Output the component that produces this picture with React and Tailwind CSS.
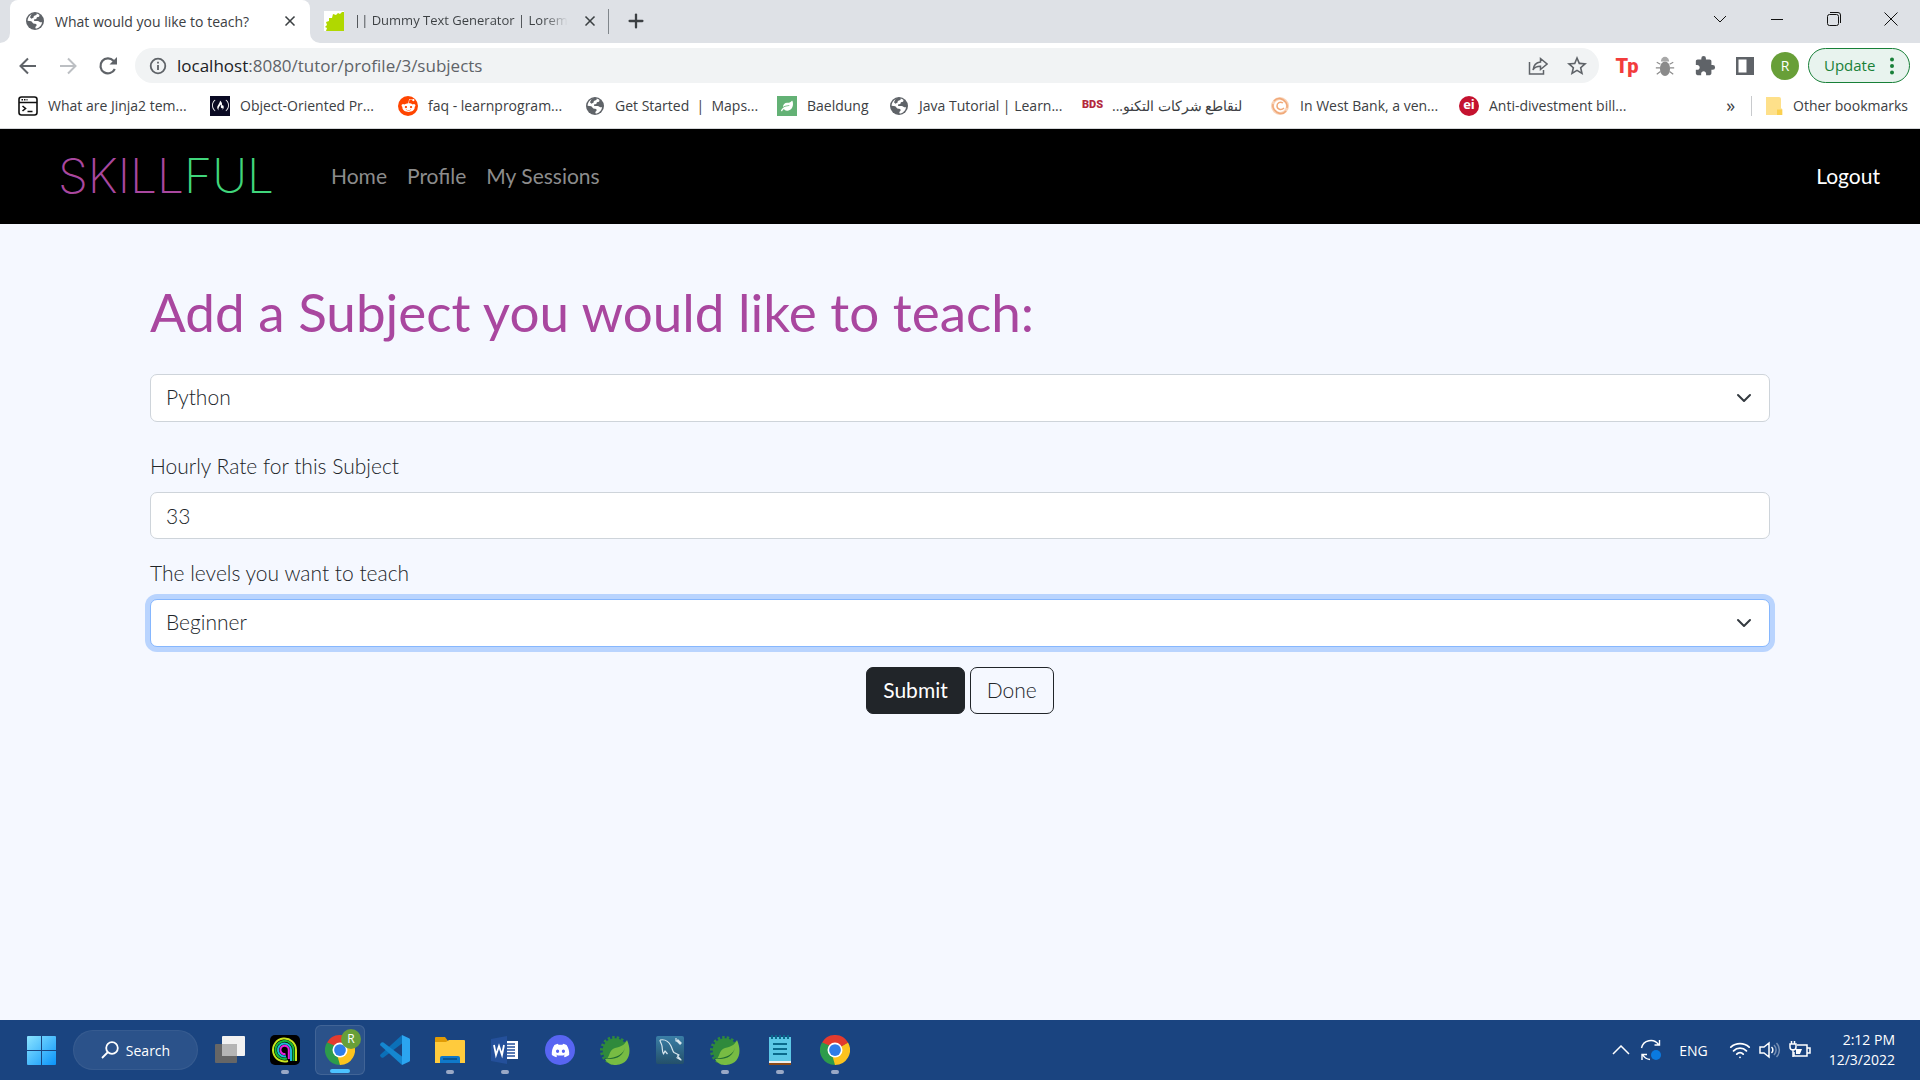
import React from "react";
import { FaDiscord, FaRedditAlien, FaLeaf, FaFreeCodeCamp } from "react-icons/fa";
import { MdExtension, MdStarBorder } from "react-icons/md";
import { Plus, X, Wifi } from "lucide-react";

function Globe() {
  return (
    <svg viewBox="0 0 20 20" className="size-5 shrink-0">
      <circle cx="10" cy="10" r="9" fill="#5f6368" />
      <path d="M9.3 2.4c1.8-.2 3.8.3 5.2 1.6l-.4 1.7-2.2.5-.6 1.7-2.3.6.2 1.4h3.4c1.6.4 2.2 1.600 4.500 1.300C16.500 14.600 13.900 17.300 10.600 17.600l-.3-1.500 1.300-1.300-.3-1.700-3-.6-2-2.300-3.700-.5C2.700 6 5.300 3 9.300 2.400Z" fill="#fff" />
      <path d="M9.500 1.600 6.400 3.200 5 6.200l1.400 1.500 2.200-1.200.2-1.600 2.400-.8 1-1.600Z" fill="#5f6368" />
    </svg>
  );
}

function ChromeLogo({ className }) {
  return (
    <svg viewBox="0 0 48 48" className={className}>
      <path d="M24 24 3.200 12A24 24 0 0 1 44.800 12Z" fill="#e33b2e" />
      <path d="M24 24 44.800 12A24 24 0 0 1 24 48Z" fill="#fcc31e" />
      <path d="M24 24 24 48A24 24 0 0 1 3.200 12Z" fill="#2d9c4b" />
      <path d="M24 12H44.800L24 24Z" fill="#e33b2e" />
      <path d="M34.400 30 24 48 20 34Z" fill="#fcc31e" />
      <path d="M13.600 30 3.200 12 18 18Z" fill="#2d9c4b" />
      <circle cx="24" cy="24" r="12" fill="#fff" />
      <circle cx="24" cy="24" r="9.400" fill="#2f7de9" />
    </svg>
  );
}

function SpringLogo() {
  return (
    <svg viewBox="0 0 30 30" className="size-[30px]">
      <circle cx="14.500" cy="15.500" r="12.700" fill="none" stroke="#2f8a3c" strokeWidth="3.600" strokeDasharray="2.400 2" />
      <circle cx="15" cy="15.500" r="12.300" fill="#2f8a3c" />
      <path d="M27 5c5 11 3 24-11 25-5 .3-9-2-11-6 5 1 3-9 10-11 6-1.700 9-2 12-8Z" fill="#77bc43" />
      <path d="M25 12c-1 7-8 11-19.500 11.500 8 1.800 18-1 19.500-11.500Z" fill="#1d6b33" />
    </svg>
  );
}

const bookmarks = [
  {
    label: "What are Jinja2 tem...", width: "w-48",
    icon: (
      <svg viewBox="0 0 20 20" className="size-5" fill="none" stroke="#111" strokeWidth="1.600">
        <rect x="1" y="1" width="18" height="18" rx="2.500" />
        <path d="M1 6.500h18M4.500 10l3 2.500-3 2.500M9.500 15.500h5" />
        <path d="M3.500 3.800h6" strokeDasharray="1.500 1" />
      </svg>
    ),
  },
  {
    label: "Object-Oriented Pr...", width: "w-[188px]",
    icon: <span className="flex size-5 items-center justify-center bg-[#0a0a23] text-white"><FaFreeCodeCamp size={17} /></span>,
  },
  {
    label: "faq - learnprogram...", width: "w-[187px]",
    icon: <span className="flex size-5 items-center justify-center rounded-full bg-[#ff4500] text-white"><FaRedditAlien size={15} /></span>,
  },
  { label: "Get Started  |  Maps...", width: "w-48", icon: <Globe /> },
  {
    label: "Baeldung", width: "w-28",
    icon: <span className="flex size-5 items-center justify-center bg-[#63b175] text-white"><FaLeaf size={12} /></span>,
  },
  { label: "Java Tutorial | Learn...", width: "w-[193px]", icon: <Globe /> },
  {
    label: "لنقاطع شركات التكنو...", width: "w-[188px]", rtl: true,
    icon: <span className="w-5 text-center font-['Roboto'] text-[11px] font-black text-[#b3283c]">BDS</span>,
  },
  {
    label: "In West Bank, a ven...", width: "w-[189px]",
    icon: (
      <svg viewBox="0 0 20 20" className="size-5" fill="none" stroke="#f0a878" strokeWidth="1.500">
        <circle cx="10" cy="10" r="7.500" strokeWidth="3" stroke="#f9d3b8" />
        <path d="M4 5c3-4 9-3 11 1M16 15c-3 4-9 3-11-1M13 7c-3-2-6 0-6 3s4 5 7 2M3 8c-1 4 2 8 6 9M17 12c1-4-2-8-6-9" />
      </svg>
    ),
  },
  {
    label: "Anti-divestment bill...", width: "w-48",
    icon: <span className="flex size-5 items-center justify-center rounded-full bg-[#c4122f] pb-px text-[13px] font-bold text-white">ei</span>,
  },
];

function BrowserTabs() {
  return (
    <div className="flex h-[43px] items-stretch bg-[#dee1e6] pl-[10px] text-[#3c4043]">
      <div className="relative flex w-[300px] items-center rounded-t-lg bg-white pb-px pl-[15px] pr-3">
        <svg viewBox="0 0 10 10" className="absolute -left-[10px] bottom-0 size-[10px]" fill="#fff"><path d="M10 0v10H0A10 10 0 0 0 10 0Z" /></svg>
        <Globe />
        <span className="ml-[10px] flex-1 whitespace-nowrap text-[14px]">What would you like to teach?</span>
        <button aria-label="Close tab"><X size={16} strokeWidth={2.500} /></button>
        <svg viewBox="0 0 10 10" className="absolute -right-[10px] bottom-0 size-[10px]" fill="#fff"><path d="M0 0v10h10A10 10 0 0 1 0 0Z" /></svg>
      </div>
      <div className="flex w-[298px] items-center pb-px pl-[14px] pr-[10px]">
        <svg viewBox="0 0 20 20" className="size-5 shrink-0">
          <path fill="#fff" d="M0 0h20v20H0z" />
          <path fill="#b0d800" d="M20 20H2l1-3-2-1 2-2-1-3 3-1 0-3 3 0 1-4 3 1 2-2 2 1 2-2h2Z" />
        </svg>
        <span className="ml-[10px] whitespace-nowrap bg-linear-to-r from-[#3c4043] from-88% to-[#dee1e6] bg-clip-text text-[13px] text-transparent">|| Dummy Text Generator | Lorem</span>
        <button aria-label="Close tab" className="ml-auto"><X size={16} strokeWidth={2.500} /></button>
      </div>
      <div className="my-auto h-[25px] w-px bg-[#80868b]" />
      <button aria-label="New tab" className="ml-4 pb-px"><Plus size={22} strokeWidth={2.500} /></button>
      <div className="ml-auto flex items-center pb-[5px] text-[#111]">
        <button aria-label="Search tabs" className="flex w-[57px] justify-center">
          <svg viewBox="0 0 14 14" className="size-[14px]" fill="none" stroke="currentColor"><path d="m1 4 6 6 6-6" /></svg>
        </button>
        <button aria-label="Minimize" className="flex w-[57px] justify-center">
          <svg viewBox="0 0 14 14" className="size-[14px]" fill="none" stroke="currentColor"><path d="M1 7.500h12" /></svg>
        </button>
        <button aria-label="Restore" className="flex w-[57px] justify-center">
          <svg viewBox="0 0 14 14" className="size-[14px]" fill="none" stroke="currentColor"><rect x=".5" y="2.500" width="11" height="11" rx="2" /><path d="M3 .5h8a2.500 2.500 0 0 1 2.500 2.500v8" /></svg>
        </button>
        <button aria-label="Close" className="flex w-[58px] justify-center">
          <svg viewBox="0 0 14 14" className="size-[14px]" fill="none" stroke="currentColor"><path d="m.5.5 13 13m0-13-13 13" /></svg>
        </button>
      </div>
    </div>
  );
}

function Toolbar() {
  return (
    <div className="flex h-[45px] items-center bg-white pl-[18px] pr-[10px] text-[#5f6368]">
      <button aria-label="Back">
        <svg viewBox="0 0 20 20" className="size-5" fill="none" stroke="currentColor" strokeWidth="2"><path d="M18 10H3m7-7.500L2.500 10l7.500 7.500" /></svg>
      </button>
      <button aria-label="Forward" className="ml-5 text-[#bcbfc3]">
        <svg viewBox="0 0 20 20" className="size-5" fill="none" stroke="currentColor" strokeWidth="2"><path d="M2 10h15m-7-7.500 7.500 7.500-7.500 7.500" /></svg>
      </button>
      <button aria-label="Reload" className="ml-5">
        <svg viewBox="0 0 20 20" className="size-5" fill="none" stroke="currentColor" strokeWidth="2.200"><path d="M16.800 13A7.500 7.500 0 1 1 15.500 4.800L17 6.500" /><path d="M19 1v7.500h-7.500Z" fill="currentColor" stroke="none" /></svg>
      </button>
      <div className="ml-[17px] flex h-[35px] flex-1 items-center rounded-full bg-[#f1f3f4] pl-[14px] pr-[10px]">
        <svg viewBox="0 0 18 18" className="size-[18px]" fill="none" stroke="currentColor" strokeWidth="1.800"><circle cx="9" cy="9" r="7.300" /><path d="M9 8v5M9 4.800v1.800" /></svg>
        <a href="#url" className="ml-[10px] text-[17px]"><span className="text-[#202124]">localhost</span>:8080/tutor/profile/3/subjects</a>
        <button aria-label="Share" className="ml-auto">
          <svg viewBox="0 0 20 20" className="size-5" fill="none" stroke="currentColor" strokeWidth="1.500"><path d="M1.500 6v12h14v-4" /><path d="M12.500 2.500 19 8l-6.500 5.500v-3.200c-3.500 0-6 1-7.500 3.700.5-4.500 3-7.500 7.500-8Z" /></svg>
        </button>
        <button aria-label="Bookmark this page" className="ml-[17px]"><MdStarBorder size={24} /></button>
      </div>
      <button aria-label="Tp extension" className="ml-4 w-6 font-['Roboto'] text-[20px] font-black leading-5 text-[#f23c3c]">Tp</button>
      <button aria-label="Bug extension" className="ml-4">
        <svg viewBox="0 0 20 24" className="h-[22px] w-5" stroke="#8a8a8a" strokeWidth="1.200" fill="none"><path d="M1 8l4 2M19 8l-4 2M0 14h5M20 14h-5M1 21l4-3M19 21l-4-3" /><ellipse cx="10" cy="15" rx="5.500" ry="8" fill="#8a8a8a" stroke="none" /><path d="M5.500 7a4.500 5 0 0 1 9 0Z" fill="#a8a8a8" stroke="none" /></svg>
      </button>
      <button aria-label="Extensions" className="ml-[19px]"><MdExtension size={22} /></button>
      <button aria-label="Side panel" className="ml-[19px]">
        <svg viewBox="0 0 20 20" className="size-5"><path fillRule="evenodd" d="M1 1h18v18H1ZM3.500 3.500v13h8v-13Z" fill="currentColor" /></svg>
      </button>
      <button aria-label="Profile" className="ml-4 size-7 rounded-full bg-[#689f38] text-[14px] text-white">R</button>
      <button className="ml-[9px] flex h-[35px] w-[102px] items-center justify-between rounded-full border border-[#188038] bg-[#e8f3ee] pl-[15px] pr-[15px] text-[15px] text-[#188038]">
        Update
        <svg viewBox="0 0 4 18" className="h-[18px] w-1" fill="currentColor"><circle cx="2" cy="2.500" r="2" /><circle cx="2" cy="9" r="2" /><circle cx="2" cy="15.500" r="2" /></svg>
      </button>
    </div>
  );
}

function BookmarksBar() {
  return (
    <div className="flex h-[41px] items-center border-b border-[#d5d7da] bg-white pb-[5px] pl-[18px] pr-3 text-[14px] text-[#3c4043]">
      {bookmarks.map((b) => (
        <a key={b.label} href="#bookmark" className={`flex shrink-0 items-center gap-[10px] whitespace-pre ${b.width}`}>
          {b.icon}
          <span dir={b.rtl ? "rtl" : "ltr"}>{b.label}</span>
        </a>
      ))}
      <button aria-label="More bookmarks" className="ml-auto text-[18px]">»</button>
      <div className="ml-4 h-5 w-px bg-[#c8cacd]" />
      <a href="#other" className="ml-[13px] flex items-center gap-[10px] whitespace-nowrap">
        <svg viewBox="0 0 18 20" className="h-5 w-[18px]"><path d="M1 1h13a2 2 0 0 1 2 2v9l1.500 1.500V19H1Z" fill="#fee08a" /><path d="M12 19v-5.500h5V19Z" fill="#fbd04e" /></svg>
        Other bookmarks
      </a>
    </div>
  );
}

function SiteNav() {
  return (
    <nav className="flex h-[95px] items-center bg-black px-10 pb-[2px] pl-[58px] font-['Lato'] text-[21px] text-[#8c8c8c]">
      <a href="#top" className="w-[219px] whitespace-nowrap font-['Inter'] text-[48px] font-extralight leading-none text-[#a9479f]">SKILL<span className="text-[#40d67b]">FUL</span></a>
      <div className="ml-[54px] flex gap-5">
        <a href="#home">Home</a>
        <a href="#profile">Profile</a>
        <a href="#sessions">My Sessions</a>
      </div>
      <a href="#logout" className="ml-auto text-white">Logout</a>
    </nav>
  );
}

const field = "block w-full appearance-none rounded-[7px] border bg-white px-[15px] outline-none";

function SelectField({ id, label, value, focused }) {
  return (
    <div className="relative">
      <select id={id} aria-label={label} defaultValue={value} className={`${field} h-12 pb-[2px] ${focused ? "border-[#86b7fe] ring-5 ring-[#b9d4fe]" : "border-[#ced4da]"}`}>
        <option>{value}</option>
      </select>
      <svg viewBox="0 0 16 16" className="pointer-events-none absolute right-[18px] top-4 size-4" fill="none" stroke="#343a40" strokeWidth="2" strokeLinecap="round" strokeLinejoin="round"><path d="m2 5 6 6 6-6" /></svg>
    </div>
  );
}

function SubjectForm() {
  return (
    <main className="flex-1 bg-[#f5f8ff] px-[150px] pt-[58px] font-['Lato'] text-[21px] font-light leading-[30px] text-[#212529]">
      <h1 className="mb-8 text-[53px] font-normal leading-[60px] text-[#a9479f]">Add a Subject you would like to teach:</h1>
      <form onSubmit={(e) => e.preventDefault()}>
        <SelectField id="subject" label="Subject" value="Python" />
        <label htmlFor="rate" className="mb-[11px] mt-[29px] block">Hourly Rate for this Subject</label>
        <input id="rate" type="text" defaultValue="33" className={`${field} h-[47px] border-[#ced4da]`} />
        <label htmlFor="level" className="mb-[11px] mt-[19px] block">The levels you want to teach</label>
        <SelectField id="level" label="Level" value="Beginner" focused />
        <div className="mt-5 flex justify-center gap-[5px]">
          <button type="submit" className="h-[47px] rounded-[7px] border border-[#212529] bg-[#212529] px-4 pb-[2px] font-normal text-white">Submit</button>
          <button type="button" className="h-[47px] rounded-[7px] border border-[#212529] px-4 pb-[2px]">Done</button>
        </div>
      </form>
    </main>
  );
}

function TaskButton({ label, active, running, children }) {
  return (
    <button aria-label={label} className={`relative flex size-[50px] items-center justify-center rounded-md ${active ? "border border-white/10 bg-white/8" : ""}`}>
      {children}
      {running && <span className={`absolute bottom-px h-1 rounded-full ${active ? "w-5 bg-[#4cc2ff]" : "w-2 bg-[#9aa9c6]"}`} />}
    </button>
  );
}

function Taskbar() {
  return (
    <footer className="flex h-[60px] items-center bg-[#1a4480] pl-4 pr-[25px] text-[14px] text-white">
      <TaskButton label="Start">
        <svg viewBox="0 0 29 29" className="size-[29px]">
          <defs><linearGradient id="win" x2="1" y2="1"><stop stopColor="#8be4ff" /><stop offset="1" stopColor="#0a94fa" /></linearGradient></defs>
          <path d="M1 0h13v14H0V1a1 1 0 0 1 1-1ZM15 0h13a1 1 0 0 1 1 1v13H15ZM0 15h14v14H1a1 1 0 0 1-1-1ZM15 15h14v13a1 1 0 0 1-1 1H15Z" fill="url(#win)" />
        </svg>
      </TaskButton>
      <button className="ml-[7px] flex h-10 w-[125px] items-center justify-center gap-[7px] rounded-full border border-white/5 bg-white/8">
        <svg viewBox="0 0 18 18" className="size-[18px]" fill="none" stroke="#fff" strokeWidth="1.800"><circle cx="11" cy="7" r="5.800" /><path d="m7 11-6 6" /></svg>
        Search
      </button>
      <div className="ml-[7px] flex gap-[5px]">
        <TaskButton label="Task view">
          <svg viewBox="0 0 30 28" className="h-7 w-[30px]"><rect y="8" width="22" height="19" rx="1" fill="#666" /><rect x="7" width="23" height="20" rx="1" fill="#f2f2f2" /><path d="M7 8h15v12H7Z" fill="#b5b5b5" /></svg>
        </TaskButton>
        <TaskButton label="Recorder" running>
          <svg viewBox="0 0 30 30" className="size-[30px]" fill="none" strokeWidth="2">
            <rect width="30" height="30" rx="5" fill="#000" />
            <path d="M26 26V15A11.500 11.500 0 1 0 18 26" stroke="#c8e61e" />
            <path d="M23.500 26V15A9 9 0 1 0 17 23.500" stroke="#18b83a" />
            <path d="M21 26V15A6.500 6.500 0 1 0 16 21.300" stroke="#1cb8d8" />
            <path d="M18.800 24V15A4.200 4.200 0 1 0 15.500 19" stroke="#e620dc" />
          </svg>
        </TaskButton>
        <TaskButton label="Chrome profile R" active running>
          <ChromeLogo className="size-[30px]" />
          <span className="absolute right-[3px] top-[3px] flex size-5 items-center justify-center rounded-full bg-[#689f38] text-xs text-white">R</span>
        </TaskButton>
        <TaskButton label="Visual Studio Code">
          <svg viewBox="0 0 30 30" className="size-[30px]"><path d="M22 0v8.500L3.500 22.500a2 2 0 0 1-2 0L.5 21.500a1.500 1.500 0 0 1 0-2Z" fill="#0b70b8" /><path d="M22 30v-8.500L3.500 7.500a2 2 0 0 0-2 0L.5 8.500a1.500 1.500 0 0 0 0 2Z" fill="#1587d0" /><path d="m22 0 7 3.200a1.500 1.500 0 0 1 1 1.500v20.600a1.500 1.500 0 0 1-1 1.500L22 30Z" fill="#2ba5f0" /></svg>
        </TaskButton>
        <TaskButton label="File Explorer" running>
          <svg viewBox="0 0 30 28" className="h-7 w-[30px]"><path d="M0 2a1 1 0 0 1 1-1h9l3 4h16v8H0Z" fill="#e09b05" /><path d="M0 6h11l3-2h15a1 1 0 0 1 1 1v22H0Z" fill="#ffcb3d" /><path d="M5 27v-5a2 2 0 0 1 2-2h16a2 2 0 0 1 2 2v5Z" fill="#0f78c9" /><path d="M8 23h14" stroke="#084b80" strokeWidth="1.500" /></svg>
        </TaskButton>
        <TaskButton label="Word" running>
          <svg viewBox="0 0 28 28" className="size-7">
            <path d="M16 5h11v18H16Z" fill="#fff" />
            <path d="M16 8h8M16 11h8M16 14h8M16 17h8M16 20h8" stroke="#24509a" strokeWidth="1.300" />
            <path d="m0 3 16-3v28L0 25Z" fill="#24509a" />
            <path d="m3 9 2 10 3-9 3 9 2-10" fill="none" stroke="#fff" strokeWidth="1.800" />
          </svg>
        </TaskButton>
        <TaskButton label="Discord"><span className="flex size-[30px] items-center justify-center rounded-full bg-[#5865f2]"><FaDiscord size={19} /></span></TaskButton>
        <TaskButton label="Spring Tools"><SpringLogo /></TaskButton>
        <TaskButton label="MySQL Workbench">
          <svg viewBox="0 0 28 28" className="size-7" fill="none" stroke="#d8e6ee" strokeWidth="1.200" strokeLinejoin="round">
            <defs><linearGradient id="sea" x2="0" y2="1"><stop stopColor="#3a7ea6" /><stop offset="1" stopColor="#24506a" /></linearGradient></defs>
            <rect width="28" height="28" rx="2" fill="url(#sea)" stroke="none" />
            <path d="M4 4c5-1 9 2 11 6 1.500 3 1.500 5 3 6.500 1.500 1 3.500 1.500 5 2.500l-1.500 1 3.500 4-4.500-2.500M4 4c0 2 1.500 3.500 2 6 .5 3 0 5 1.500 8l1.500-3 2.500 3" />
            <path d="m21 4 4 4" strokeWidth="2.600" /><path d="M20 2v3h3" />
          </svg>
        </TaskButton>
        <TaskButton label="Spring application" running><SpringLogo /></TaskButton>
        <TaskButton label="Notepad" running>
          <svg viewBox="0 0 22 30" className="h-[30px] w-[22px]"><path d="M0 2h22v25H0Z" fill="#5cc8e6" /><path d="M0 26h22v2H0Z" fill="#eee" /><path d="M0 28h22v2H0Z" fill="#8d4a16" /><path d="M4 9h14M4 14h14M4 19h14" stroke="#0a6a8c" strokeWidth="1.800" /><path d="M3 0v4M7 0v4M11 0v4M15 0v4M19 0v4" stroke="#0a6a8c" strokeWidth="2" /></svg>
        </TaskButton>
        <TaskButton label="Chrome" running><ChromeLogo className="size-[30px]" /></TaskButton>
      </div>
      <div className="ml-auto flex items-center">
        <svg viewBox="0 0 18 10" className="h-[10px] w-[18px]" fill="none" stroke="#fff" strokeWidth="1.500"><path d="m1 9 8-8 8 8" /></svg>
        <svg viewBox="0 0 22 22" className="ml-[10px] size-[22px]" fill="none" stroke="#fff" strokeWidth="1.400"><path d="M1.500 9a9.500 9.500 0 0 1 17-3.500M19.500 1v5h-5M10 20.500a9.500 9.500 0 0 1-7.500-5M2 21v-5.500h5" /><circle cx="16" cy="16" r="5" fill="#0a7ae0" stroke="none" /></svg>
        <span className="ml-[17px]">ENG</span>
        <Wifi className="ml-[21px]" size={22} strokeWidth={2} />
        <svg viewBox="0 0 22 18" className="ml-2 h-[18px] w-[22px]" fill="none" stroke="#fff" strokeWidth="1.500"><path d="M1 6h4l5-4v14l-5-4H1ZM12.500 6a4 4 0 0 1 0 6" /><path d="M15 4a7 7 0 0 1 0 10M17.500 2a10 10 0 0 1 0 14" opacity=".4" /></svg>
        <svg viewBox="0 0 22 18" className="ml-2 h-[18px] w-[22px]" fill="none" stroke="#fff" strokeWidth="1.500"><path d="M8 4h10v11H5v-4M18 7h3v5h-3" /><path d="M7 13V8h6l-2 5Z" fill="#fff" stroke="none" /><path d="M1 3h6v3a3 3 0 0 1-6 0ZM2.500 0v3M5.500 0v3M4 8v8" /></svg>
        <div className="ml-[18px] text-right leading-5">2:12 PM<br />12/3/2022</div>
      </div>
    </footer>
  );
}

export default function App() {
  return (
    <div className="flex min-h-screen flex-col font-['Open_Sans',sans-serif]">
      <header>
        <BrowserTabs />
        <Toolbar />
        <BookmarksBar />
      </header>
      <SiteNav />
      <SubjectForm />
      <Taskbar />
    </div>
  );
}
